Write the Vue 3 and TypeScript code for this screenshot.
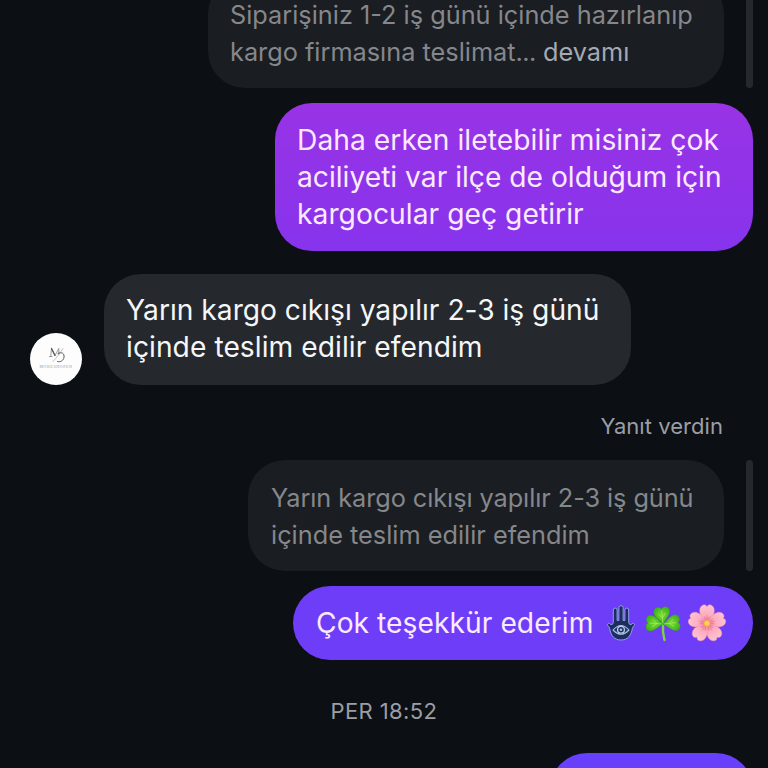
<script setup lang="ts">
const repliedTo: string[] = ['Yarın kargo cıkışı yapılır 2-3 iş günü', 'içinde teslim edilir efendim']
const request: string[] = [
  'Daha erken iletebilir misiniz çok',
  'aciliyeti var ilçe de olduğum için',
  'kargocular geç getirir',
]
const petals: number[] = [0, 72, 144, 216, 288]
const leaves: number[] = [-86, 84, -6]
</script>

<template>
  <main class="chat">
    <section class="quote-row quote-row-top">
      <div class="bubble quote quote-clipped">
        <span class="line">Siparişiniz 1-2 iş günü içinde hazırlanıp</span>
        <span class="line">kargo firmasına teslimat<span class="dots">...</span> <span class="more">devamı</span></span>
      </div>
      <i class="quote-bar"></i>
    </section>

    <section class="bubble sent sent-request">
      <span v-for="line in request" :key="line" class="line">{{ line }}</span>
    </section>

    <section class="received-row">
      <div class="avatar">
        <svg viewBox="0 0 52 52" width="52" height="52" aria-hidden="true">
          <g fill="none" stroke="#777" stroke-width="0.7" stroke-linecap="round">
            <path d="M19.500 23.500h2.500M20.700 23.500l.8-8 3.500 7 3.800-7v6" />
            <path d="M21.500 15.500l3.500 7" stroke="#555" stroke-width="1.300" />
            <path d="M33 15.500c-3 4-6 9-10 13" stroke="#aaa" />
            <path d="M28 20.500c4-2 6.500 0 6 3.800-.5 3.200-3.500 5.200-6.500 4.200" stroke="#555" stroke-width="1" />
          </g>
        </svg>
        <span class="brand">MORESHOPEN</span>
      </div>
      <div class="bubble received">
        <span v-for="line in repliedTo" :key="line" class="line">{{ line }}</span>
      </div>
    </section>

    <p class="reply-label">Yanıt verdin</p>

    <section class="quote-row">
      <div class="bubble quote">
        <span v-for="line in repliedTo" :key="line" class="line">{{ line }}</span>
      </div>
      <i class="quote-bar"></i>
    </section>

    <section class="bubble sent sent-thanks">
      <span class="line">Çok teşekkür ederim</span>
      <span class="emojis">
        <svg viewBox="0 0 30 36" width="30" height="36" aria-hidden="true">
          <path
            d="M7.300 17.500V5a1.900 1.900 0 0 1 3.800 0v10.500h1.800V2.700a2 2 0 0 1 4.200 0v12.800h1.800V5a1.900 1.900 0 0 1 3.800 0v12.500c.2 2.200 2.300 2.800 3.400 1.300.8-1 2.600-.4 2.400 1-.2 1.100-1.600 1.600-2.100 3.400C25.200 30.800 21.500 35 15 35S4.800 30.800 3.600 23.200C3.100 21.400 1.700 20.900 1.500 19.800c-.2-1.400 1.600-2 2.400-1 1.100 1.500 3.200.9 3.400-1.300z"
            fill="#1d2d60" stroke="#8ea2e0" stroke-width="1" stroke-linejoin="round"
          />
          <path d="M7 25q8-9 16 0-8 8.500-16 0z" fill="#22386e" stroke="#a9bde2" stroke-width="1.100" />
          <circle cx="15" cy="24.800" r="3.400" fill="#1b2d5d" stroke="#bccdea" stroke-width="1.300" />
          <circle cx="15" cy="24.800" r="1.300" fill="#a9bddf" />
        </svg>
        <svg viewBox="0 0 36 37" width="36" height="37" aria-hidden="true">
          <defs>
            <radialGradient id="leaf" gradientUnits="userSpaceOnUse" cx="0" cy="-9" r="10">
              <stop offset="0" stop-color="#77dc2b" />
              <stop offset="1" stop-color="#35ac1c" />
            </radialGradient>
          </defs>
          <path d="M17 19c-.5 6 .2 11 1.500 16" fill="none" stroke="#7fd04a" stroke-width="2.400" stroke-linecap="round" />
          <g v-for="angle in leaves" :key="angle" :transform="`translate(17 19) rotate(${angle})`">
            <path
              d="M0 1C-1.500-4-8-7.500-8-12.500c0-4.300 5.200-6.300 8-2.500 2.800-3.800 8-1.800 8 2.500C8-7.500 1.500-4 0 1z"
              fill="url(#leaf)" stroke="#2f9a1d" stroke-width=".3"
            />
            <path d="M0-1V-13M0-6l3.500-4.500M0-6l-3.500-4.500" fill="none" stroke="#a6ec68" stroke-width=".7" stroke-linecap="round" />
          </g>
        </svg>
        <svg viewBox="0 0 38 38" width="38" height="38" aria-hidden="true">
          <defs>
            <radialGradient id="petal" gradientUnits="userSpaceOnUse" cx="0" cy="0" r="19">
              <stop offset="0" stop-color="#ee6b92" />
              <stop offset=".4" stop-color="#fcaabf" />
              <stop offset="1" stop-color="#ffc4cf" />
            </radialGradient>
          </defs>
          <g v-for="angle in petals" :key="angle" :transform="`translate(19 19.500) rotate(${angle})`">
            <path
              d="M0 0C-3-4-7.500-7.500-7.300-13.300c.2-3.500 3-6 5.700-5.200L0-17l1.600-1.500c2.700-.8 5.500 1.700 5.700 5.200C7.500-7.500 3-4 0 0z"
              fill="url(#petal)" stroke="#f38fab" stroke-width=".4"
            />
            <path d="M0-4v-4.500M-1.200-4l-1.500-3M1.200-4l1.500-3" fill="none" stroke="#e0608a" stroke-width=".5" />
          </g>
          <circle cx="19" cy="19.500" r="3.400" fill="#f5a043" />
          <circle cx="19" cy="19.200" r="2.500" fill="#ffd35c" />
        </svg>
      </span>
    </section>

    <time class="timestamp">PER 18:52</time>

    <section class="bubble sent sent-next"></section>
  </main>
</template>

<style>
body {
  margin: 0;
  background: #0c0f14;
}
</style>

<style scoped>
.chat {
  box-sizing: border-box;
  width: 768px;
  height: 768px;
  overflow: hidden;
  display: flex;
  flex-direction: column;
  align-items: flex-end;
  padding-right: 15px;
  background: #0c0f14;
  font-family: Inter, 'Noto Sans', sans-serif;
}
.bubble {
  box-sizing: border-box;
  flex: none;
  border-radius: 37px;
  padding: 18px 22px;
  font-size: 28.200px;
  line-height: 37px;
  letter-spacing: 0.050px;
  color: #f5f6f8;
}
.line {
  display: block;
  white-space: nowrap;
}
.quote-row {
  flex: none;
  display: flex;
  gap: 22px;
}
.quote-row-top {
  height: 88px;
  align-items: flex-end;
}
.quote {
  width: 476px;
  height: 111px;
  padding: 19px 23px;
  background: #1a1d21;
  color: #85878b;
  font-size: 25.300px;
}
.quote .line {
  letter-spacing: 0;
}
.quote .line:first-child {
  letter-spacing: -0.070px;
}
.quote-clipped {
  width: 516px;
}
.quote-clipped .line {
  margin-left: -1px;
}
.quote-clipped .line:first-child {
  letter-spacing: 0;
}
.dots {
  letter-spacing: -0.500px;
}
.more {
  color: #a4a9b3;
}
.quote-bar {
  width: 7px;
  height: 111px;
  border-radius: 3.500px;
  background: #25282d;
}
.sent {
  color: #fbeaff;
}
.sent-request {
  width: 478px;
  height: 148px;
  margin-top: 15px;
  padding-top: 19px;
  background: linear-gradient(#9933e5, #8733ed);
}
.sent-request .line:nth-child(2) {
  letter-spacing: 0;
}
.received-row {
  flex: none;
  align-self: flex-start;
  display: flex;
  align-items: flex-end;
  gap: 22px;
  margin: 23px 0 0 30px;
}
.received {
  width: 527px;
  height: 111px;
  background: #25282d;
}
.received .line:first-child {
  letter-spacing: -0.010px;
}
.avatar {
  flex: none;
  position: relative;
  width: 52px;
  height: 52px;
  border-radius: 50%;
  background: #fdfdfd;
  overflow: hidden;
}
.avatar svg {
  display: block;
}
.brand {
  position: absolute;
  left: 0;
  right: 0;
  top: 31px;
  text-align: center;
  font: 4px/6px 'Liberation Serif', serif;
  letter-spacing: 0.600px;
  color: #999;
}
.reply-label {
  margin: 27px 30px 0 0;
  font-size: 22px;
  line-height: 28px;
  letter-spacing: 0.050px;
  color: #9b9ea4;
}
.reply-label + .quote-row {
  margin-top: 20px;
}
.sent-thanks {
  width: 460px;
  height: 74px;
  margin-top: 15px;
  padding-left: 23px;
  display: flex;
  align-items: center;
  background: #6e3df8;
}
.emojis {
  display: flex;
  align-items: center;
  gap: 10px;
  margin: 0 0 0 13px;
}
.emojis svg {
  display: block;
}
.emojis svg:last-child {
  margin-left: -4px;
}
.timestamp {
  align-self: center;
  margin: 38px 0 0 15px;
  font-size: 22px;
  line-height: 27px;
  letter-spacing: 0.400px;
  color: #9b9ea4;
}
.sent-next {
  width: 203px;
  height: 74px;
  margin-top: 28px;
  background: #6840fb;
}
</style>
